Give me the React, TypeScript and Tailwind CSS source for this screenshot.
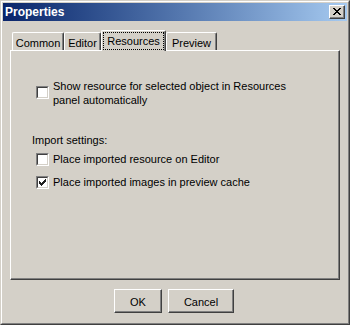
import React from "react";

const CheckBox = ({ checked }: { checked?: boolean }) => (
  <div className="w-[13px] h-[13px] shrink-0 border border-t-[#808080] border-l-[#808080] border-r-white border-b-white">
    <div className="w-full h-full bg-white border border-t-[#404040] border-l-[#404040] border-r-[#d4d0c8] border-b-[#d4d0c8]">
      {checked && (
        <svg width="9" height="9" viewBox="0 0 9 9" shapeRendering="crispEdges" className="block">
          <g fill="#202020">
            <rect x="7" y="1" width="1" height="1" />
            <rect x="6" y="2" width="2" height="1" />
            <rect x="1" y="3" width="1" height="1" />
            <rect x="5" y="3" width="3" height="1" />
            <rect x="1" y="4" width="2" height="1" />
            <rect x="4" y="4" width="3" height="1" />
            <rect x="1" y="5" width="5" height="1" />
            <rect x="2" y="6" width="3" height="1" />
            <rect x="3" y="7" width="1" height="1" />
          </g>
        </svg>
      )}
    </div>
  </div>
);

const Tab = ({ label, selected }: { label: string; selected?: boolean }) => {
  if (selected) {
    return (
      <div className="relative z-10 -mb-px h-[21px] w-[65px] rounded-t-[2px] bg-[#d4d0c8] border-l border-t border-r border-l-white border-t-white border-r-[#404040] shadow-[inset_-1px_0_0_#808080] pt-[3px] text-center leading-[14px]">
        {label}
        <div className="absolute left-[1px] top-[1px] right-[1px] bottom-[1px] border border-dotted border-black" />
      </div>
    );
  }
  return null;
};

const PlainTab = ({ label, w }: { label: string; w: string }) => (
  <div className={`${w} h-[18px] rounded-t-[2px] bg-[#d4d0c8] border-l border-t border-r border-l-white border-t-white border-r-[#404040] shadow-[inset_-1px_0_0_#808080] pt-[3px] text-center leading-[14px]`}>
    {label}
  </div>
);

const Button = ({ label, w }: { label: string; w: string }) => (
  <div className={`${w} h-[24px] bg-[#d4d0c8] border border-t-white border-l-white border-r-[#404040] border-b-[#404040] shadow-[inset_-1px_-1px_0_#808080] flex items-center justify-center pt-[2px] leading-[14px]`}>
    {label}
  </div>
);

export default function App() {
  return (
    <div className="w-[350px] h-[325px] bg-[#d4d0c8] border border-t-[#d4d0c8] border-l-[#d4d0c8] border-r-[#404040] border-b-[#404040] font-['Liberation_Sans',Arial,sans-serif] text-[11px] text-black select-none">
      <div className="h-full border border-t-white border-l-white border-r-[#808080] border-b-[#808080] p-px flex flex-col">
        {/* Title bar */}
        <div className="h-[18px] shrink-0 flex items-center bg-gradient-to-r from-[#0a246a] to-[#a6caf0] pl-[2px]">
          <span className="text-white font-bold text-[12px] leading-[18px]">Properties</span>
          <div className="ml-auto mr-[2px] w-[16px] h-[14px] bg-[#d4d0c8] border border-t-white border-l-white border-r-[#404040] border-b-[#404040] shadow-[inset_-1px_-1px_0_#808080] flex items-center justify-center">
            <svg width="8" height="7" viewBox="0 0 8 7" shapeRendering="crispEdges" className="block -mt-px">
              <g fill="#000">
                <rect x="0" y="0" width="2" height="1" />
                <rect x="6" y="0" width="2" height="1" />
                <rect x="1" y="1" width="2" height="1" />
                <rect x="5" y="1" width="2" height="1" />
                <rect x="2" y="2" width="4" height="1" />
                <rect x="3" y="3" width="2" height="1" />
                <rect x="2" y="4" width="4" height="1" />
                <rect x="1" y="5" width="2" height="1" />
                <rect x="5" y="5" width="2" height="1" />
                <rect x="0" y="6" width="2" height="1" />
                <rect x="6" y="6" width="2" height="1" />
              </g>
            </svg>
          </div>
        </div>

        {/* Body */}
        <div className="flex-1 flex flex-col px-[7px]">
          {/* Tabs */}
          <div className="mt-[9px] h-[20px] flex items-end pl-[2px]">
            <PlainTab label="Common" w="w-[52px]" />
            <PlainTab label="Editor" w="w-[37px]" />
            <Tab label="Resources" selected />
            <PlainTab label="Preview" w="w-[51px]" />
          </div>

          {/* Panel */}
          <div className="h-[230px] border border-t-white border-l-white border-r-[#404040] border-b-[#404040] shadow-[inset_-1px_-1px_0_#808080] pt-[28px] pl-[21px]">
            <div className="flex items-start ml-[4px]">
              <div className="mt-[7px]">
                <CheckBox />
              </div>
              <div className="ml-[4px] w-[245px] leading-[14px]">
                Show resource for selected object in Resources panel automatically
              </div>
            </div>

            <div className="mt-[26px] leading-[14px]">Import settings:</div>

            <div className="mt-[5px] ml-[4px] h-[14px] flex items-center">
              <CheckBox />
              <span className="ml-[4px] leading-[14px]">Place imported resource on Editor</span>
            </div>

            <div className="mt-[9px] ml-[4px] h-[14px] flex items-center">
              <CheckBox checked />
              <span className="ml-[4px] leading-[14px]">Place imported images in preview cache</span>
            </div>
          </div>

          {/* Buttons */}
          <div className="mt-[9px] flex justify-center gap-[6px] pr-[2px]">
            <Button label="OK" w="w-[48px]" />
            <Button label="Cancel" w="w-[66px]" />
          </div>
        </div>
      </div>
    </div>
  );
}
